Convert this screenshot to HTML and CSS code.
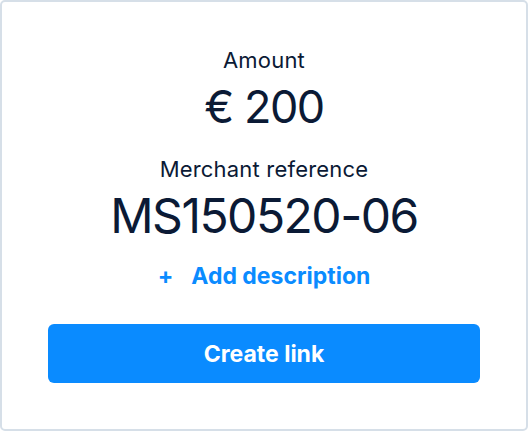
FILE: index.html
```html
<!DOCTYPE html>
<html>
<head>
<meta charset="utf-8">
<link rel="stylesheet" href="styles.css">
</head>
<body>
<div class="card">
  <div class="label">Amount</div>
  <div class="amount">€ 200</div>
  <div class="label ref-label">Merchant reference</div>
  <div class="ref">MS150520-06</div>
  <div class="add"><span class="plus">+</span><span>Add description</span></div>
  <button class="btn">Create link</button>
</div>
</body>
</html>
```
FILE: styles.css
```css
* { box-sizing: border-box; }
html, body { margin: 0; padding: 0; background: #fff; }
body { font-family: Inter, "Noto Sans", sans-serif; color: #0b1a35; }
.card {
  width: 528px;
  height: 431px;
  border: 2px solid #d6dfe8;
  border-radius: 5px;
  padding: 43px 46px 0;
  display: flex;
  flex-direction: column;
  align-items: center;
}
.label { font-size: 22px; line-height: 30px; letter-spacing: 0.2px; }
.amount { font-size: 45px; line-height: 54px; margin-top: 5px; letter-spacing: -1.5px; }
.ref-label { margin-top: 20px; }
.ref { font-size: 48px; line-height: 56px; margin-top: 4px; letter-spacing: -1.5px; }
.add {
  margin-top: 17px;
  color: #0a8bff;
  font-weight: 700;
  font-size: 23px;
  line-height: 30px;
  display: flex;
  gap: 18px;
}
.btn {
  margin-top: 33px;
  width: 432px;
  height: 59px;
  flex-shrink: 0;
  border: none;
  border-radius: 6px;
  background: #0a8bff;
  color: #fff;
  font-family: inherit;
  font-weight: 700;
  font-size: 23px;
  padding: 0;
}
```
